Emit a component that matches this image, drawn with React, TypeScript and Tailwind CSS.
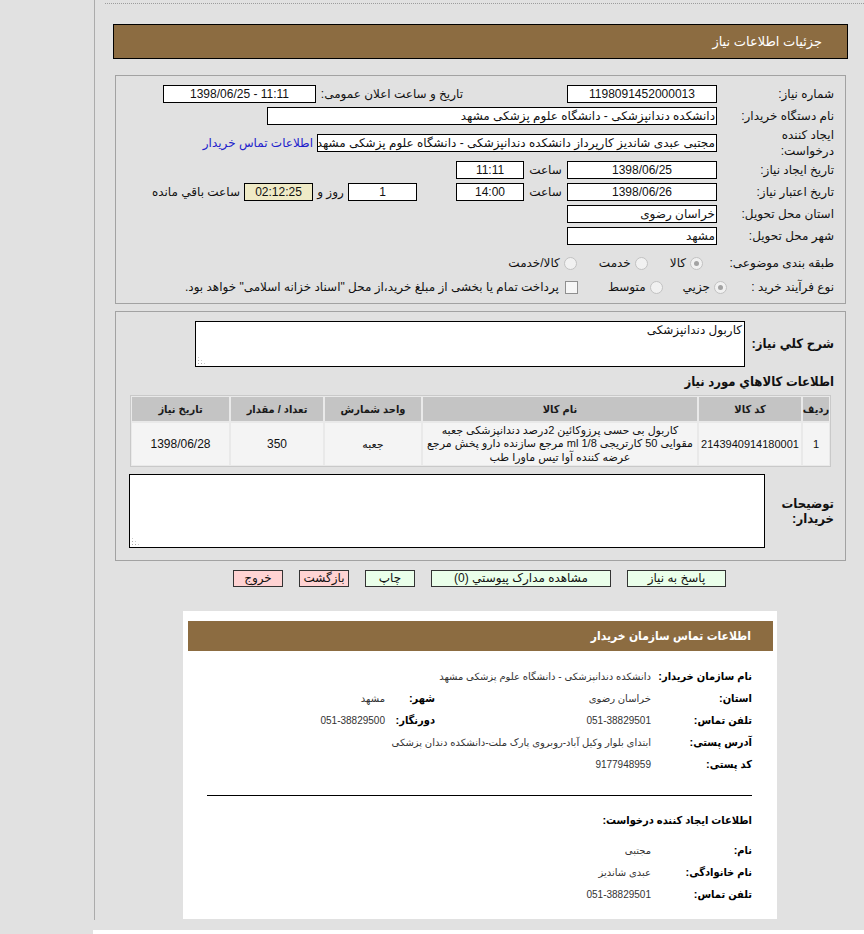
import React from 'react';

const font = "font-['Liberation_Sans','DejaVu_Sans',sans-serif]";
const cond = "font-['Liberation_Sans','DejaVu_Sans_Condensed','DejaVu_Sans',sans-serif]";

function Label({ children, className = '' }: { children: React.ReactNode; className?: string }) {
  return <div className={`shrink-0 text-[12px] text-[#111] ${className}`}>{children}</div>;
}

function Box({ children, className = '' }: { children?: React.ReactNode; className?: string }) {
  return (
    <div className={`h-[18px] shrink-0 overflow-hidden whitespace-nowrap border border-black bg-white text-[12px] leading-[16px] text-[#111] ${className}`}>
      {children}
    </div>
  );
}

function Radio({ checked = false }: { checked?: boolean }) {
  return (
    <span className="flex h-[13px] w-[13px] shrink-0 items-center justify-center rounded-full border border-[#c2c2c2] bg-[#f1f1f1]">
      {checked && <span className="h-[5px] w-[5px] rounded-full bg-[#a3a3a3]" />}
    </span>
  );
}

function Grip() {
  return (
    <svg className="absolute bottom-[2px] left-[2px]" width="7" height="7" viewBox="0 0 7 7">
      <rect x="0" y="6" width="1" height="1" fill="#aaa" />
      <rect x="0" y="3" width="1" height="1" fill="#aaa" />
      <rect x="3" y="6" width="1" height="1" fill="#aaa" />
      <rect x="0" y="0" width="1" height="1" fill="#ccc" />
      <rect x="3" y="3" width="1" height="1" fill="#ccc" />
      <rect x="6" y="6" width="1" height="1" fill="#ccc" />
    </svg>
  );
}

const headers = ['ردیف', 'کد کالا', 'نام کالا', 'واحد شمارش', 'تعداد / مقدار', 'تاریخ نیاز'];

const contactRows = [
  { label: 'نام سازمان خریدار:', value: 'دانشکده دندانپزشکی - دانشگاه علوم پزشکی مشهد' },
  { label: 'استان:', value: 'خراسان رضوی', label2: 'شهر:', value2: 'مشهد' },
  { label: 'تلفن تماس:', value: '051-38829501', label2: 'دورنگار:', value2: '051-38829500' },
  { label: 'آدرس پستی:', value: 'ابتدای بلوار وکیل آباد-روبروی پارک ملت-دانشکده دندان پزشکی' },
  { label: 'کد پستی:', value: '9177948959' },
];

const creatorRows = [
  { label: 'نام:', value: 'مجتبی' },
  { label: 'نام خانوادگی:', value: 'عبدی شاندیز' },
  { label: 'تلفن تماس:', value: '051-38829501' },
];

function ContactRow({ label, value, label2, value2 }: { label: string; value: string; label2?: string; value2?: string }) {
  return (
    <div className="flex h-[22px] items-center whitespace-nowrap">
      <div className={`w-[101px] shrink-0 text-[11px] font-bold text-black ${cond}`}>{label}</div>
      <div className="w-[216px] shrink-0 text-[10px] text-[#333]">{value}</div>
      {label2 && <div className={`w-[50px] shrink-0 text-[11px] font-bold text-black ${cond}`}>{label2}</div>}
      {value2 && <div className="text-[10px] text-[#333]">{value2}</div>}
    </div>
  );
}

export default function App() {
  return (
    <div className={`min-h-[934px] bg-[#e1e1e1] ${font}`}>
      <div className="flex h-[920px]">
        <div className="w-[94px] shrink-0" />
        <div className="w-[770px] shrink-0 border-l border-[#ababab]">
          <div className="ml-[10px] pt-[3px]">
            <div className="border-t border-dotted border-[#9c9c9c]" />
          </div>

          {/* header */}
          <div dir="rtl" className="mt-[20px] mr-[16px] ml-[18px] flex h-[35px] items-center border border-black bg-[#8c6c41] pr-[25px] text-[13px] text-white">
            جزئیات اطلاعات نیاز
          </div>

          {/* panel 1 */}
          <div dir="rtl" className="mt-[16px] mr-[18px] ml-[20px] border border-[#a2a2a2] pt-[7px] pb-[4px] pr-[11px]">
            <div className="flex h-[22px] items-center">
              <Label className="w-[117px]">شماره نیاز:</Label>
              <Box className="w-[150px] text-center">1198091452000013</Box>
              <Label className="mr-[104px] w-[147px]">تاریخ و ساعت اعلان عمومی:</Label>
              <Box className="w-[153px] text-center">
                <span dir="ltr">1398/06/25 - 11:11</span>
              </Box>
            </div>
            <div className="flex h-[22px] items-center">
              <Label className="w-[117px]">نام دستگاه خریدار:</Label>
              <Box className="w-[450px] pr-[1px]">دانشکده دندانپزشکی - دانشگاه علوم پزشکی مشهد</Box>
            </div>
            <div className="flex h-[32px] items-center">
              <Label className="w-[117px] leading-[16px]">
                ایجاد کننده
                <br />
                درخواست:
              </Label>
              <Box className="w-[400px] pr-[1px]">مجتبی عبدی شاندیز کارپرداز دانشکده دندانپزشکی - دانشگاه علوم پزشکی مشهد</Box>
              <span className="mr-[4px] text-[12px] text-[#2222cc]">اطلاعات تماس خریدار</span>
            </div>
            <div className="flex h-[22px] items-center">
              <Label className="w-[117px]">تاریخ ایجاد نیاز:</Label>
              <Box className="w-[150px] text-center">1398/06/25</Box>
              <Label className="w-[43px] text-center">ساعت</Label>
              <Box className="w-[68px] text-center">11:11</Box>
            </div>
            <div className="flex h-[22px] items-center">
              <Label className="w-[117px]">تاریخ اعتبار نیاز:</Label>
              <Box className="w-[150px] text-center">1398/06/26</Box>
              <Label className="w-[43px] text-center">ساعت</Label>
              <Box className="w-[68px] text-center">14:00</Box>
              <Box className="mr-[39px] w-[69px] text-center">1</Box>
              <Label className="w-[35px] text-center">روز و</Label>
              <Box className="w-[69px] !bg-[#efeac6] text-center">02:12:25</Box>
              <Label className="mr-[4px]">ساعت باقي مانده</Label>
            </div>
            <div className="flex h-[22px] items-center">
              <Label className="w-[117px]">استان محل تحویل:</Label>
              <Box className="w-[150px] pr-[1px]">خراسان رضوی</Box>
            </div>
            <div className="flex h-[22px] items-center">
              <Label className="w-[117px]">شهر محل تحویل:</Label>
              <Box className="w-[150px] pr-[1px]">مشهد</Box>
            </div>
            <div className="mt-[4px] flex h-[24px] items-center text-[12px] text-[#111]">
              <Label className="w-[131px]">طبقه بندی موضوعی:</Label>
              <div className="flex items-center gap-[22px]">
                <div className="flex items-center gap-[4px]">
                  <Radio checked />
                  <span>کالا</span>
                </div>
                <div className="flex items-center gap-[4px]">
                  <Radio />
                  <span>خدمت</span>
                </div>
                <div className="flex items-center gap-[4px]">
                  <Radio />
                  <span>کالا/خدمت</span>
                </div>
              </div>
            </div>
            <div className="flex h-[24px] items-center text-[12px] text-[#111]">
              <Label className="w-[107px]">نوع فرآیند خرید :</Label>
              <div className="flex items-center gap-[4px]">
                <Radio checked />
                <span>جزیي</span>
              </div>
              <div className="mr-[20px] flex items-center gap-[4px]">
                <Radio />
                <span>متوسط</span>
              </div>
              <div className="mr-[30px] flex items-center gap-[6px]">
                <span className="h-[13px] w-[13px] shrink-0 border border-[#8f8f8f] bg-[#f6f6f6]" />
                <span className="tracking-[0.3px]">پرداخت تمام یا بخشی از مبلغ خرید،از محل "اسناد خزانه اسلامی" خواهد بود.</span>
              </div>
            </div>
          </div>

          {/* panel 2 */}
          <div dir="rtl" className="mt-[7px] mr-[18px] ml-[20px] border border-[#a2a2a2] pt-[9px] pb-[12px]">
            <div className="flex items-center pr-[11px]">
              <div className={`w-[89px] shrink-0 whitespace-nowrap text-[13px] font-bold text-[#111] ${cond}`}>شرح کلي نیاز:</div>
              <div className="relative h-[46px] w-[550px] border border-black bg-white px-[2px] text-[12px] leading-[16px] text-[#111]">
                کاربول دندانپزشکی
                <Grip />
              </div>
            </div>
            <div className={`mt-[7px] pr-[11px] text-[13px] leading-[16px] font-bold text-[#111] ${cond}`}>اطلاعات کالاهاي مورد نیاز</div>
            <div className="mt-[5px] mr-[14px] ml-[14px] border border-[#c9c9c9] bg-[#e9e9e9] p-[1px]">
              <div className="grid grid-cols-[26px_102px_274px_96px_92px_97px] gap-[2px]">
                {headers.map((h) => (
                  <div key={h} className={`flex h-[24px] items-center justify-center whitespace-nowrap bg-[#c4c4c4] text-[11px] font-bold text-[#1a1a1a] ${cond}`}>
                    {h}
                  </div>
                ))}
                <div className="flex h-[42px] items-center justify-center bg-[#f4f4f4] text-[11px] text-[#111]">1</div>
                <div className="flex h-[42px] items-center justify-center bg-[#f4f4f4] text-[11px] text-[#111]">2143940914180001</div>
                <div className="flex h-[42px] items-center justify-center bg-[#f4f4f4] px-[4px] text-center text-[11px] leading-[13.5px] text-[#111]">
                  کاربول بی حسی پرزوکائین 2درصد دندانپزشکی جعبه مقوایی 50 کارتریجی 1/8 ml مرجع سازنده دارو پخش مرجع عرضه کننده آوا تیس ماورا طب
                </div>
                <div className="flex h-[42px] items-center justify-center bg-[#f4f4f4] text-[11px] text-[#111]">جعبه</div>
                <div className="flex h-[42px] items-center justify-center bg-[#f4f4f4] text-[12px] text-[#111]">350</div>
                <div className="flex h-[42px] items-center justify-center bg-[#f4f4f4] text-[12px] text-[#111]">1398/06/28</div>
              </div>
            </div>
            <div className="mt-[7px] flex items-center pr-[11px]">
              <div className={`w-[69px] shrink-0 text-[13px] leading-[15px] font-bold text-[#111] ${cond}`}>
                توضیحات
                <br />
                خریدار:
              </div>
              <div className="relative h-[74px] w-[636px] border border-black bg-white">
                <Grip />
              </div>
            </div>
          </div>

          {/* buttons */}
          <div dir="rtl" className="mt-[9px] flex justify-center gap-[16px] text-[12px] leading-[15px] text-[#111]">
            <button className="h-[17px] w-[99px] border border-[#333] bg-[#eaffea]">پاسخ به نیاز</button>
            <button className="h-[17px] w-[180px] border border-[#333] bg-[#eaffea]">مشاهده مدارک پیوستي (0)</button>
            <button className="h-[17px] w-[50px] border border-[#333] bg-[#eaffea]">چاپ</button>
            <button className="h-[17px] w-[50px] whitespace-nowrap border border-[#333] bg-[#ffd3d3]">بازگشت</button>
            <button className="h-[17px] w-[50px] border border-[#333] bg-[#ffd3d3]">خروج</button>
          </div>

          {/* contact info */}
          <div dir="rtl" className="mt-[24px] ml-[88px] h-[308px] w-[594px] bg-white pt-[10px]">
            <div className={`mr-[4px] ml-[5px] flex h-[30px] items-center bg-[#8c6c41] pr-[22px] text-[12px] font-bold text-white ${cond}`}>
              اطلاعات تماس سازمان خریدار
            </div>
            <div className="mt-[14px] pr-[25px]">
              {contactRows.map((r) => (
                <ContactRow key={r.label} {...r} />
              ))}
            </div>
            <div className="mt-[20px] mr-[25px] ml-[24px] border-t border-black" />
            <div className={`mt-[13px] flex h-[22px] items-center pr-[25px] text-[11px] font-bold text-black ${cond}`}>
              اطلاعات ایجاد کننده درخواست:
            </div>
            <div className="mt-[8px] pr-[25px]">
              {creatorRows.map((r) => (
                <ContactRow key={r.label} {...r} />
              ))}
            </div>
          </div>
        </div>
      </div>
      <div className="h-[10px]" />
      <div className="ml-[93px] h-[4px] bg-white" />
    </div>
  );
}
